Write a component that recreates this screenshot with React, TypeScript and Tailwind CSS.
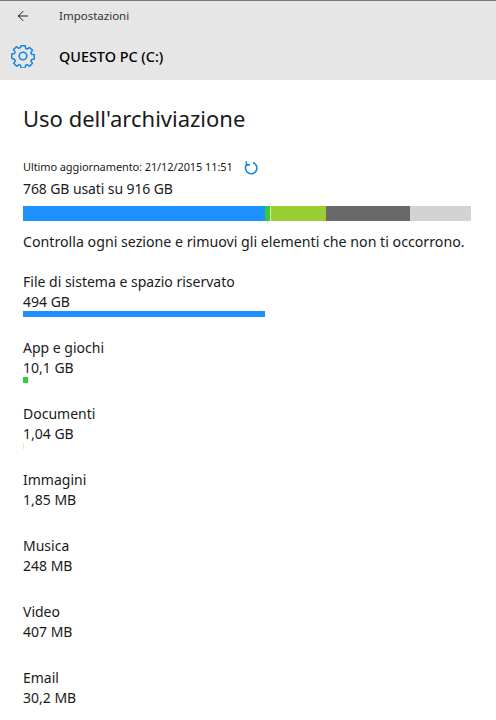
import React from 'react';
import { ArrowLeft } from 'lucide-react';

const font = "font-['Noto_Sans','Liberation_Sans',sans-serif]";

const sections = [
  { id: 1, title: 'File di sistema e spazio riservato', size: '494 GB', bar: 'w-[242px] h-[6px] -mt-px bg-[#1e90ff]' },
  { id: 2, title: 'App e giochi', size: '10,1 GB', bar: 'w-[5px] h-[6px] -mt-px bg-[#32cd32]' },
  { id: 3, title: 'Documenti', size: '1,04 GB', bar: 'w-px h-[6px] -mt-px bg-[#eee8aa]' },
  { id: 4, title: 'Immagini', size: '1,85 MB', bar: '' },
  { id: 5, title: 'Musica', size: '248 MB', bar: '' },
  { id: 6, title: 'Video', size: '407 MB', bar: '' },
  { id: 7, title: 'Email', size: '30,2 MB', bar: '' },
];

// 8-tooth settings gear, drawn on a 24 box
const Gear = () => (
  <svg width="24" height="24" viewBox="0 0 24 24" fill="none" stroke="#1a86e0" strokeWidth="1.6" strokeLinejoin="round">
    <path d="M9.8 1h4.4l.5 2.9 1.7.7 2.4-1.7 3.1 3.1-1.7 2.4.7 1.7 2.9.5v4.4l-2.9.5-.7 1.7 1.7 2.4-3.1 3.1-2.4-1.7-1.7.7-.5 2.9H9.8l-.5-2.9-1.7-.7-2.4 1.7-3.1-3.1 1.7-2.4-.7-1.7L0 14.2V9.8l2.9-.5.7-1.7-1.7-2.4L5 2.1l2.4 1.7 1.7-.7z" transform="translate(.7 .7) scale(.95)" />
    <circle cx="12" cy="12" r="3.8" />
  </svg>
);

const Refresh = () => (
  <svg width="14" height="14" viewBox="0 0 14 14" fill="none" stroke="#1a86e0" strokeWidth="1.6">
    <path d="M9 1.6A5.7 5.7 0 1 1 2.6 3.6" />
    <path d="M2.2 .4l.4 3.6 3.6-.4" />
  </svg>
);

export default function App() {
  return (
    <div className={`w-[496px] h-[720px] overflow-hidden bg-white text-[#1a1a1a] ${font}`}>
      <div className="h-20 bg-[#e6e6e6] border-t border-[#7a7a7a]">
        <div className="flex items-center h-[29px] pl-[15px]">
          <ArrowLeft className="w-[16px] h-[16px] text-black" strokeWidth={1.3} />
          <span className="ml-[28px] text-[11.5px] text-[#333]">Impostazioni</span>
        </div>
        <div className="flex items-center h-[52px] pl-[11px]">
          <Gear />
          <span className="ml-[24px] mt-[1px] text-[14.4px] font-medium text-black">QUESTO PC (C:)</span>
        </div>
      </div>

      <div className="px-[23px]">
        <h1 className="mt-[22px] text-[22px] leading-[32px] text-[#1a1a1a]">Uso dell'archiviazione</h1>
        <div className="flex items-center mt-[23px] h-[20px]">
          <span className="text-[11px] tracking-[-0.1px]">Ultimo aggiornamento: 21/12/2015 11:51</span>
          <span className="ml-[11px] mt-[2px]"><Refresh /></span>
        </div>
        <p className="text-[14px] leading-[20px] mt-[2px] tracking-[-0.1px]">768 GB usati su 916 GB</p>

        <div className="flex h-[15px] w-[448px] mt-[7px]">
          <div className="w-[242px] bg-[#1e90ff]" />
          <div className="w-[5px] bg-[#32cd32]" />
          <div className="w-px bg-[#eee8aa]" />
          <div className="w-[55px] bg-[#9acd32]" />
          <div className="w-[84px] bg-[#696969]" />
          <div className="w-[61px] bg-[#d3d3d3]" />
        </div>

        <p className="text-[14.2px] leading-[20px] mt-[11px]">Controlla ogni sezione e rimuovi gli elementi che non ti occorrono.</p>

        <div className="mt-[20px] flex flex-col">
          {sections.map(s => (
            <div key={s.id} className="h-[66px]">
              <p className="text-[14px] leading-[20px]">{s.title}</p>
              <p className="text-[14px] leading-[20px]">{s.size}</p>
              {s.bar && <div className={s.bar} />}
            </div>
          ))}
        </div>
      </div>
    </div>
  );
}
